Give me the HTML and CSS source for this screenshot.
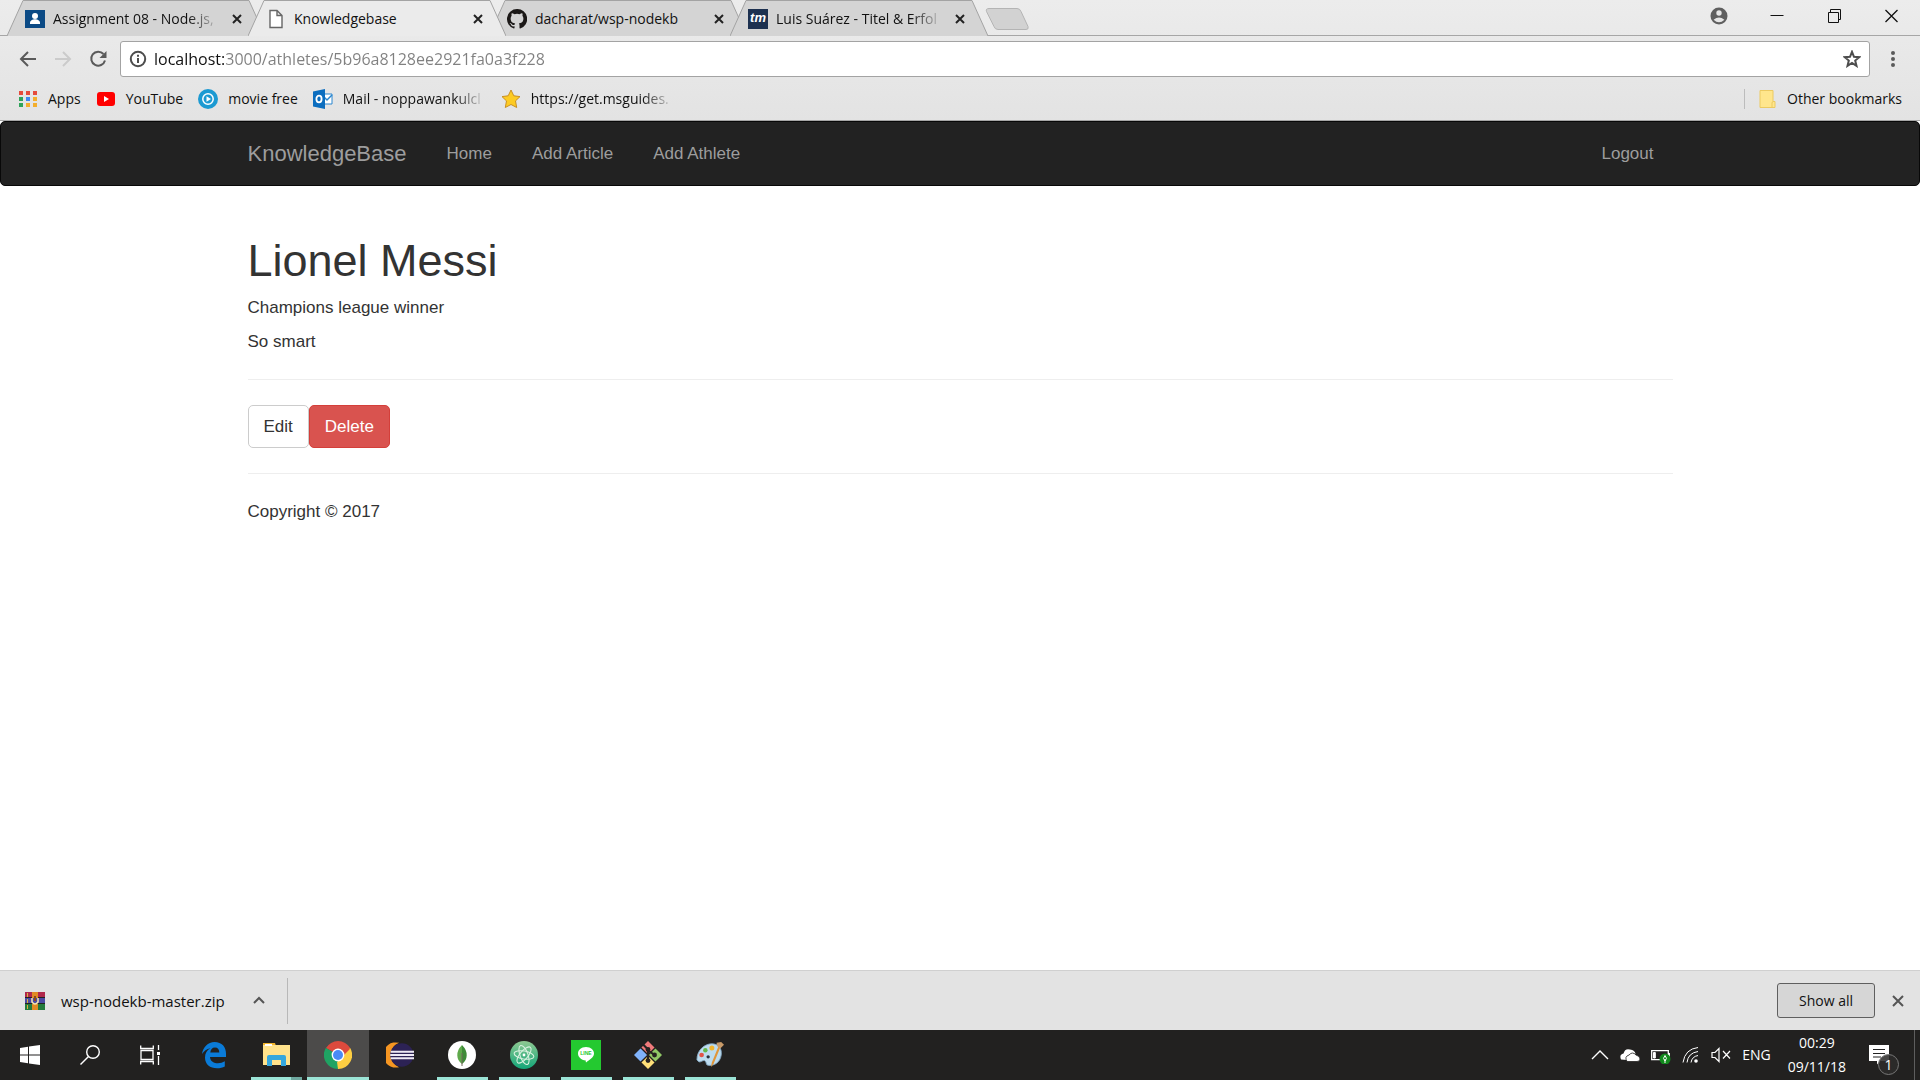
FILE: index.html
```html
<!DOCTYPE html>
<html lang="en">
<head>
<meta charset="utf-8">
<title>Knowledgebase</title>
<link rel="stylesheet" href="styles.css">
</head>
<body>
<header class="browser">
  <div class="tabstrip">
    <div class="tabs">
      <div class="tab">
        <svg class="tab-shape" viewBox="0 0 258 36"><path d="M0 36 L16 .5 H242 L258 36"/></svg>
        <svg class="favicon" viewBox="0 0 20 20"><rect y="1" width="20" height="18" fill="#0b4a85"/><circle cx="10" cy="7" r="3" fill="#fff"/><path d="M5 14c0-5 10-5 10 0v1H5z" fill="#fff"/></svg>
        <span class="tab-title faded">Assignment 08 - Node.js,</span>
        <button class="tab-close" aria-label="Close tab"><svg viewBox="0 0 12 12"><path d="M2 2l8 8M10 2l-8 8"/></svg></button>
      </div>
      <div class="tab active">
        <svg class="tab-shape" viewBox="0 0 258 36"><path d="M0 36 L16 .5 H242 L258 36"/></svg>
        <svg class="favicon" viewBox="0 0 20 20"><path d="M4 1.500h7l5 5v12H4zM11 1.500v5h5" fill="#fff" stroke="#666" stroke-width="1.400"/></svg>
        <span class="tab-title">Knowledgebase</span>
        <button class="tab-close" aria-label="Close tab"><svg viewBox="0 0 12 12"><path d="M2 2l8 8M10 2l-8 8"/></svg></button>
      </div>
      <div class="tab">
        <svg class="tab-shape" viewBox="0 0 258 36"><path d="M0 36 L16 .5 H242 L258 36"/></svg>
        <svg class="favicon" viewBox="0 0 16 16"><path fill="#1b1817" d="M8 0a8 8 0 0 0-2.530 15.590c.4.070.55-.17.55-.38v-1.340c-2.230.49-2.700-1.070-2.700-1.070-.36-.92-.89-1.170-.89-1.170-.73-.5.050-.49.050-.49.810.060 1.230.830 1.230.830.720 1.230 1.880.87 2.340.67.070-.52.280-.87.510-1.070-1.780-.2-3.640-.89-3.640-3.950 0-.87.310-1.590.820-2.150-.080-.2-.360-1.020.080-2.120 0 0 .67-.21 2.200.82a7.600 7.600 0 0 1 4 0c1.530-1.040 2.200-.82 2.200-.82.440 1.100.16 1.920.080 2.120.51.560.82 1.270.82 2.150 0 3.070-1.870 3.750-3.650 3.950.29.25.54.73.54 1.480v2.200c0 .21.150.46.550.38A8 8 0 0 0 8 0z"/></svg>
        <span class="tab-title">dacharat/wsp-nodekb</span>
        <button class="tab-close" aria-label="Close tab"><svg viewBox="0 0 12 12"><path d="M2 2l8 8M10 2l-8 8"/></svg></button>
      </div>
      <div class="tab">
        <svg class="tab-shape" viewBox="0 0 258 36"><path d="M0 36 L16 .5 H242 L258 36"/></svg>
        <span class="favicon tm">tm</span>
        <span class="tab-title faded">Luis Suárez - Titel &amp; Erfol</span>
        <button class="tab-close" aria-label="Close tab"><svg viewBox="0 0 12 12"><path d="M2 2l8 8M10 2l-8 8"/></svg></button>
      </div>
      <button class="new-tab" aria-label="New tab"><svg viewBox="0 0 44 22"><path d="M4 .5h28q3 0 4 3l7 15q1 3-2 3H13q-3 0-4-3L1.500 3.500Q.5.5 4 .5z"/></svg></button>
    </div>
    <div class="window-buttons">
      <button aria-label="Profile"><svg viewBox="0 0 18 18"><circle cx="9" cy="9" r="8.500" fill="#5f5f5f"/><circle cx="9" cy="6" r="2.700" fill="#e6e6e6"/><path d="M3.600 12.700q5.400-4.500 10.800 0-5.400 5.300-10.800 0z" fill="#e6e6e6"/></svg></button>
      <button aria-label="Minimize"><svg viewBox="0 0 18 18"><path d="M2.500 8.500h13"/></svg></button>
      <button aria-label="Restore"><svg viewBox="0 0 18 18"><path d="M2.500 5.500h10v10h-10zM4.500 5.500v-3h10v10h-2"/></svg></button>
      <button aria-label="Close"><svg viewBox="0 0 18 18"><path d="M2.500 3l12 12M14.500 3l-12 12" stroke-width="1.300"/></svg></button>
    </div>
  </div>
  <div class="toolbar">
    <button class="tool" aria-label="Back"><svg viewBox="0 0 18 18"><path d="M17 9H2M9 2L2 9l7 7"/></svg></button>
    <button class="tool off" aria-label="Forward"><svg viewBox="0 0 18 18"><path d="M1 9h15M9 2l7 7-7 7"/></svg></button>
    <button class="tool" aria-label="Reload"><svg viewBox="0 0 18 18"><path d="M14.500 4A7 7 0 1 0 16 10.500"/><path d="M17.500 1v7h-7z" fill="#5a5a5a" stroke="none"/></svg></button>
    <div class="omnibox">
      <svg class="info" viewBox="0 0 18 18"><circle cx="9" cy="9" r="7.200"/><path d="M9 8v5M9 4.800v2"/></svg>
      <input class="url" type="text" aria-label="Address" value="localhost:3000/athletes/5b96a8128ee2921fa0a3f228">
      <svg class="star" viewBox="0 0 18 18"><path d="M9 1.800l2 5 5.300.4-4.100 3.400 1.300 5.300L9 13l-4.500 2.900 1.300-5.300-4.100-3.400L7 6.800z"/></svg>
    </div>
    <button class="menu" aria-label="Menu"><svg viewBox="0 0 4 16"><circle cx="2" cy="2" r="2"/><circle cx="2" cy="8" r="2"/><circle cx="2" cy="14" r="2"/></svg></button>
  </div>
  <nav class="bookmarks" aria-label="Bookmarks">
    <a href="#"><svg viewBox="0 0 20 20"><path fill="#e54b3c" d="M1 2h4v4H1zM8 2h4v4H8zM15 2h4v4h-4z"/><path fill="#2fa35a" d="M1 8h4v4H1zM1 14h4v4H1z"/><path fill="#3f87f2" d="M8 8h4v4H8z"/><path fill="#f3ae2c" d="M15 8h4v4h-4zM8 14h4v4H8zM15 14h4v4h-4z"/></svg><span>Apps</span></a>
    <a href="#"><svg viewBox="0 0 20 20"><rect x="1" y="3" width="18" height="14" rx="3" fill="#f00"/><path d="M8 7l5 3-5 3z" fill="#fff"/></svg><span>YouTube</span></a>
    <a href="#"><svg viewBox="0 0 20 20"><circle cx="10" cy="10" r="10" fill="#1c9ad2"/><circle cx="10" cy="10" r="5.200" fill="none" stroke="#fff" stroke-width="1.500"/><path d="M8.500 7.300l4.500 2.700-4.500 2.700z" fill="#fff"/></svg><span>movie free</span></a>
    <a href="#"><svg viewBox="0 0 20 20"><path d="M10 5h9v10h-9z" fill="#fff" stroke="#2a86cf"/><path d="M11 8l3 3 5-5" fill="none" stroke="#2a86cf" stroke-width="1.500"/><path d="M0 2.500L12 0v20L0 17.500z" fill="#0b6dbf"/><ellipse cx="6" cy="10" rx="2.600" ry="3.300" fill="none" stroke="#fff" stroke-width="1.800"/></svg><span class="bm-long faded">Mail - noppawankulcl</span></a>
    <a href="#"><svg viewBox="0 0 20 20"><path d="M10 1l2.800 5.800 6.200.8-4.500 4.300 1.200 6.600-5.700-3-5.700 3 1.200-6.600L1 7.600l6.200-.8z" fill="#fdcb22" stroke="#c99023" stroke-linejoin="round"/></svg><span class="bm-long faded">https://get.msguides.</span></a>
    <a href="#" class="other"><svg viewBox="0 0 20 20"><path d="M3 1.500h13v11h2v6H3z" fill="#ffe68c" stroke="#ecca61"/><path d="M15 18v-4q0-1.500 1.500-1.500" fill="none" stroke="#ecca61"/></svg><span>Other bookmarks</span></a>
  </nav>
</header>

<div class="site">
  <nav class="navbar">
    <div class="container navbar-row">
      <a href="#" class="brand">KnowledgeBase</a>
      <a href="#">Home</a>
      <a href="#">Add Article</a>
      <a href="#">Add Athlete</a>
      <a href="#" class="logout">Logout</a>
    </div>
  </nav>
  <main class="container">
    <h1>Lionel Messi</h1>
    <p>Champions league winner</p>
    <p>So smart</p>
    <hr>
    <div class="actions">
      <button class="btn">Edit</button>
      <button class="btn btn-danger">Delete</button>
    </div>
    <hr>
    <footer>Copyright © 2017</footer>
  </main>
</div>

<section class="downloads" aria-label="Downloads">
  <div class="download">
    <svg class="rar" viewBox="0 0 20 18"><path fill="#b0284c" d="M0 0h20v6H0z"/><path fill="#4b4aa3" d="M0 6h20v6H0z"/><path fill="#247a3c" d="M0 12h20v6H0z"/><path d="M0 5.500h20M0 11.500h20" stroke="#222"/><path d="M2.500 1v4M2.500 7v4M2.500 13v4" stroke="#d9b23a"/><path fill="#e08b24" d="M7 0h6v6H7zM7 12h6v6H7z"/><path fill="none" stroke="#f7e8b0" stroke-width="1.500" d="M7 6v4q3 4 6 0V6"/><path d="M9 4h2v5H9z" fill="#8a4a1a"/></svg>
    <span>wsp-nodekb-master.zip</span>
    <button class="icon-button" aria-label="Download options"><svg viewBox="0 0 14 14"><path d="M2 9l5-5 5 5"/></svg></button>
  </div>
  <button class="show-all">Show all</button>
  <button class="icon-button" aria-label="Close downloads"><svg viewBox="0 0 14 14"><path d="M2 2l10 10M12 2L2 12"/></svg></button>
</section>

<footer class="taskbar">
  <div class="system">
    <button aria-label="Start"><svg viewBox="0 0 20 20" fill="#fff"><path d="M0 3l8-1.200V9.500H0zM9 1.600L20 0v9.500H9zM0 10.500h8v7.700L0 17zM9 10.500h11V20L9 18.400z"/></svg></button>
    <button aria-label="Search"><svg viewBox="0 0 20 20" fill="none" stroke="#fff" stroke-width="1.400"><circle cx="13" cy="7" r="6.300"/><path d="M8.500 11.500L.5 19.500"/></svg></button>
    <button aria-label="Task view"><svg viewBox="0 0 20 20" fill="none" stroke="#fff" stroke-width="1.300"><path d="M1 5.500h12v9H1zM.7.500v3h12.600v-3M.7 19.500v-3h12.600v3M18.500 0v5M18.500 11v9"/><path d="M17 7h3v3h-3z" fill="#fff" stroke="none"/></svg></button>
  </div>
  <div class="apps">
    <button aria-label="Edge"><svg viewBox="0 0 28 28"><path fill="#0a7bd8" d="M2 13C3 6 8 1 14.500 1 22 1 26 6 26 12.500V16H10c.3 4.500 4 6.300 8 6.300 2.500 0 4.700-.7 6.800-2v5.200C22.700 26.700 20 27.300 17 27.300c-7 0-12-4-12-10.800 0-4 2-7.500 5.500-9.200C6.500 8 4 10 2 13zm8.300-1.500h9C19.300 8.500 18 6.500 15 6.500s-4.400 2-4.700 5z"/></svg></button>
    <button class="running grouped" aria-label="File Explorer"><svg viewBox="0 0 28 28"><path fill="#f2b52d" d="M1 2h12l1 3H1z"/><path fill="#ffe28b" d="M1 4h27v20H1z"/><path d="M3 4h7" stroke="#fff" stroke-width="2"/><path fill="#35a7dd" d="M5 25V16q0-2 2-2h15q2 0 2 2v9h-5v-6h-9v6z"/></svg></button>
    <button class="running current" aria-label="Chrome"><svg viewBox="0 0 28 28"><path fill="#dc4a3d" d="M14 14L2 7a14 14 0 0 1 24.200 0z"/><path fill="#fdce42" d="M14 14L26.200 7A14 14 0 0 1 14 28z"/><path fill="#1fa363" d="M14 14v14A14 14 0 0 1 1.800 7z"/><path fill="#dc4a3d" d="M14 7.500h12.400L20 14z"/><path fill="#fdce42" d="M19.600 17.200L14 28l-1-7z"/><path fill="#1fa363" d="M1.800 7l6.600 11 4-4z"/><circle cx="14" cy="14" r="6.400" fill="#fff"/><circle cx="14" cy="14" r="5" fill="#4a8af4"/></svg></button>
    <button aria-label="Eclipse"><svg viewBox="0 0 30 28"><path d="M14 1A13.500 13.500 0 1 0 14 27 14 14 0 0 1 14 1z" fill="#f69622"/><circle cx="17" cy="14" r="12.500" fill="#2c2255"/><path d="M5 10.500h25M4.500 14h26M5 17.500h25" stroke="#eeeaf5" stroke-width="2"/></svg></button>
    <button class="running" aria-label="MongoDB"><svg viewBox="0 0 28 28"><circle cx="14" cy="14" r="14" fill="#fff"/><path d="M14 4Q9 9 9.300 14.500 9.500 20 14 23z" fill="#5fa94b"/><path d="M14 4q5 5 4.700 10.500Q18.500 20 14 23z" fill="#3f8b38"/><path d="M14 12v13" stroke="#74685a"/></svg></button>
    <button class="running" aria-label="Atom"><svg viewBox="0 0 28 28"><defs><linearGradient id="atom" x1="0" y1="0" x2="0" y2="1"><stop offset="0" stop-color="#8fc992"/><stop offset="1" stop-color="#12a678"/></linearGradient></defs><circle cx="14" cy="14" r="14" fill="url(#atom)"/><g fill="none" stroke="#d8f1df" stroke-width="1.100"><ellipse cx="14" cy="14" rx="10" ry="4" transform="rotate(10 14 14)"/><ellipse cx="14" cy="14" rx="10" ry="4" transform="rotate(70 14 14)"/><ellipse cx="14" cy="14" rx="10" ry="4" transform="rotate(130 14 14)"/></g><circle cx="14" cy="14" r="1.400" fill="#fff"/></svg></button>
    <button class="running" aria-label="LINE"><span class="line-icon"><svg viewBox="0 0 30 30"><path d="M0 0h30v30H0z" fill="#24c930"/><path d="M15 7c5 0 8 3 8 6.500 0 4-5 6.500-7.500 8.700-.8.500-.8-.8-.7-1.800C10 20 7 17 7 13.500 7 10 10 7 15 7z" fill="#fff"/></svg><b>LINE</b></span></button>
    <button class="running" aria-label="Git"><svg viewBox="0 0 30 30"><path d="M15 0l7 7-7 7-7-7z" fill="#f17a7b"/><path d="M7 8l7 7-7 7-7-7z" fill="#80b3fb"/><path d="M23 8l7 7-7 7-7-7z" fill="#90c766"/><path d="M15 16l7 7-7 7-7-7z" fill="#ffe079"/><path d="M10 4l5 5v12M15 10l7 5" fill="none" stroke="#262321" stroke-width="2.300"/><circle cx="15" cy="9" r="2.600" fill="#262321"/><circle cx="15" cy="21" r="2.600" fill="#262321"/><circle cx="22" cy="15" r="2.600" fill="#262321"/></svg></button>
    <button class="running" aria-label="Paint"><svg viewBox="0 0 30 30"><path d="M1 20C1 10 9 3 17 3c7 0 11 5 10 12-1 8-8 12-14 11-3 0-1-4-4-5-3-.5-5 4-8-1z" fill="#bddcef" stroke="#84a9c4"/><circle cx="6" cy="15" r="2.500" fill="#e15348"/><circle cx="10" cy="10" r="2.400" fill="#65b84c"/><circle cx="17" cy="7.500" r="2.700" fill="#f1b52e"/><circle cx="13" cy="17" r="1.800" fill="#29323e"/><path d="M16 28l1-5L24 6l2 1-7 17z" fill="#e0963a"/><path d="M23 6l-1-4 5-1 3 3-4 4z" fill="#c89a68"/></svg></button>
  </div>
  <div class="tray">
    <svg class="t-up" viewBox="0 0 18 18"><path d="M1 13l8-8 8 8" stroke-width="1.400"/></svg>
    <svg class="t-cloud" viewBox="0 0 20 18"><path d="M1 13.500q-2-5 2.500-6Q5 2 10 3.500q5 .5 5.500 4.500-7-2-8.500 6z" fill="#fff" stroke="none"/><path d="M7 15.500q-3-5 2-6.500 3.500-4 7 0 4 1 4 4 0 2.500-3 2.500z" fill="#fff" stroke="#222120" stroke-width=".8"/></svg>
    <svg class="t-battery" viewBox="0 0 20 18"><path d="M.7 4.700h16.600v9H.7zM18.300 7v4" stroke-width="1.300"/><path d="M2.500 6.500h1.800v5.500H2.500z" fill="#fff"/><circle cx="14" cy="13" r="5.500" fill="#128a1d" stroke="none"/><path d="M14 9.500q-3 3 0 5.500 3-2.500 0-5.500zM14 13v4"/></svg>
    <svg class="t-wifi" viewBox="0 0 18 18"><path d="M1 16.500Q3 3 16 1.500M5 16.500Q6 7 16 5.500M9 16.500Q10 10.500 16 9.500"/><circle cx="14" cy="15" r="1.800" fill="#fff" stroke="none"/></svg>
    <svg class="t-volume" viewBox="0 0 20 18"><path d="M1 6.500h3l4-4v13l-4-4H1zM12 5l7 7.500M19 5l-7 7.500" stroke-width="1.200"/></svg>
    <span class="lang">ENG</span>
    <div class="clock"><span>00:29</span><span>09/11/18</span></div>
    <div class="notify"><svg viewBox="0 0 20 20"><path d="M0 0h20v16H11l-3 3.500V16H0z" fill="#fff" stroke="none"/><path d="M4 4.500h12M4 8.500h12M4 12h8" stroke="#222"/></svg><span class="badge">1</span></div>
  </div>
</footer>
</body>
</html>
```

FILE: styles.css
```css
* { box-sizing: border-box; }

body {
  margin: 0;
  min-height: 100vh;
  display: flex;
  flex-direction: column;
  background: #fff;
  color: #111;
  font: 14px/20px "Open Sans", "Noto Sans", sans-serif;
}

button {
  display: flex;
  align-items: center;
  justify-content: center;
  padding: 0;
  border: 0;
  background: none;
  font: inherit;
  color: inherit;
}

a { color: inherit; text-decoration: none; }
svg { display: block; flex: none; }

.faded {
  -webkit-mask-image: linear-gradient(90deg, #000 calc(100% - 32px), transparent);
  mask-image: linear-gradient(90deg, #000 calc(100% - 32px), transparent);
}

/* Browser frame */
.browser {
  background: linear-gradient(#ececec, #e3e3e3);
  border-bottom: 1px solid #a6a6a6;
}

.tabstrip {
  display: flex;
  justify-content: space-between;
  height: 36px;
  border-bottom: 1px solid #a6a6a6;
}

.tabs { display: flex; padding-left: 7px; }

.tab {
  position: relative;
  display: flex;
  align-items: center;
  width: 258px;
  height: 36px;
  padding: 2px 19px 0 18px;
  margin-right: -17px;
}

.tab.active { z-index: 1; }
.tab > * { position: relative; }
.tab > .tab-shape { position: absolute; inset: 0; width: 100%; height: 100%; }
.tab-shape path { fill: #d4d4d4; stroke: #a3a3a3; }
.tab.active .tab-shape path { fill: #ebebeb; }

.favicon { width: 20px; height: 20px; margin-right: 8px; }

.tm {
  background: #1d3150;
  color: #fff;
  font: italic bold 13px/18px "Liberation Sans", sans-serif;
  text-align: center;
}

.tab-title { flex: 1; overflow: hidden; white-space: nowrap; color: #111; }
.tab-close { width: 18px; height: 18px; margin-left: 8px; }
.tab-close svg { width: 12px; height: 12px; stroke: #222; stroke-width: 2; }

.new-tab { height: 22px; margin: 8px 0 0 14px; }
.new-tab svg { width: 44px; height: 22px; fill: #d2d2d2; stroke: #b4b4b4; }

.window-buttons { display: flex; }
.window-buttons button { width: 57px; height: 32px; }
.window-buttons button:nth-child(-n+2) { width: 58px; }
.window-buttons svg { width: 18px; height: 18px; fill: none; stroke: #111; }
.window-buttons button:first-child svg { stroke: none; }

.toolbar {
  display: flex;
  align-items: center;
  gap: 17px;
  padding: 5px 25px 5px 19px;
}

.tool svg { width: 18px; height: 18px; fill: none; stroke: #5a5a5a; stroke-width: 2; }
.tool.off svg { stroke: #cbcbcb; }

.omnibox {
  flex: 1;
  display: flex;
  align-items: center;
  gap: 7px;
  height: 36px;
  margin: 0 4px 0 -4px;
  padding: 0 8px;
  border: 1px solid #a3a3a3;
  border-radius: 3px;
  background: #fff;
}

.info, .star { width: 18px; height: 18px; fill: none; stroke: #4d4d4d; stroke-width: 2; }

.url {
  flex: 1;
  min-width: 0;
  height: 28px;
  padding: 0;
  border: 0;
  outline: 0;
  font: 16px/28px "Open Sans", "Noto Sans", sans-serif;
  color: transparent;
  background: linear-gradient(90deg, #111 70px, #808080 70px);
  -webkit-background-clip: text;
  background-clip: text;
}

.menu svg { width: 4px; height: 16px; fill: #5a5a5a; }

.bookmarks {
  display: flex;
  align-items: center;
  gap: 15px;
  height: 38px;
  padding: 0 18px 4px;
}

.bookmarks a { display: flex; align-items: center; gap: 10px; white-space: nowrap; }
.bookmarks svg { width: 20px; height: 20px; }
.bm-long { width: 143px; overflow: hidden; }
.other { margin-left: auto; padding-left: 12px; border-left: 1px solid #bcbcbc; }

/* Site */
.site {
  flex: 1;
  color: #333;
  font: 17px/25px "Liberation Sans", Arial, sans-serif;
}

.container { width: 100%; max-width: 1463px; margin: 0 auto; padding: 0 19px; }

.navbar {
  display: flex;
  min-height: 65px;
  margin-bottom: 50px;
  border: 1px solid #080808;
  border-radius: 5px;
  background: #222;
  color: #9d9d9d;
}

.navbar-row { display: flex; align-items: center; gap: 40px; }
.brand { font-size: 22px; }
.logout { margin-left: auto; padding-right: 19px; }

h1 { margin: 0 0 9px; font-size: 45px; font-weight: 400; line-height: 50px; }
p { margin: 0 0 9px; }
hr { margin: 25px 0; border: 0; border-top: 1px solid #eee; }

.actions { display: flex; }
.btn {
  height: 43px;
  padding: 0 15px;
  border: 1px solid #ccc;
  border-radius: 5px;
  background: #fff;
}
.btn-danger { border-color: #d43f3a; background: #d9534f; color: #fff; }

/* Downloads shelf */
.downloads {
  display: flex;
  align-items: center;
  gap: 16px;
  height: 60px;
  padding-right: 15px;
  border-top: 1px solid #d0d0d0;
  background: #e3e3e3;
}

.download {
  display: flex;
  align-items: center;
  gap: 16px;
  height: 46px;
  margin-right: auto;
  padding: 0 21px 0 25px;
  border-right: 1px solid #b8b8b8;
  font-size: 15px;
}

.rar { width: 20px; height: 18px; }
.icon-button svg { width: 14px; height: 14px; fill: none; stroke: #555; stroke-width: 2; }
.download .icon-button { margin-left: 11px; }

.show-all {
  width: 98px;
  height: 35px;
  border: 1px solid #5f5f5f;
  border-radius: 3px;
  background: #d6d6d6;
}

/* Taskbar */
.taskbar {
  display: flex;
  height: 50px;
  background: #222120;
  color: #fff;
}

.system, .apps { display: flex; }
.system button { width: 60px; }
.system svg { width: 20px; height: 20px; }
.apps { margin-left: 3px; }
.apps button { position: relative; width: 62px; }
.apps svg { width: 28px; height: 28px; }
.apps .line-icon svg { width: 30px; height: 30px; }

.running::after {
  content: "";
  position: absolute;
  bottom: 0;
  left: 6px;
  right: 5px;
  height: 3px;
  background: #9be4d6;
}
.grouped::after { background: linear-gradient(90deg, #9be4d6 40px, #6fa89f 40px); }
.apps .current { background: #4c4b4a; }
.current::after { left: 0; right: 0; }

.line-icon { position: relative; }
.line-icon b {
  position: absolute;
  inset: 9px 0 auto;
  color: #24c930;
  font: bold 5px/9px "Liberation Sans", sans-serif;
  text-align: center;
}

.tray {
  display: flex;
  align-items: center;
  margin-left: auto;
  padding-right: 5px;
  gap: 11px;
}
.tray svg { width: 18px; height: 18px; fill: none; stroke: #fff; }
.tray .t-cloud, .tray .t-battery, .tray .t-volume { width: 20px; }
.clock { display: flex; flex-direction: column; gap: 4px; text-align: center; margin-left: 6px; }

.notify {
  position: relative;
  display: flex;
  align-items: center;
  height: 50px;
  margin-left: 12px;
  padding-right: 25px;
  border-right: 1px solid #5e5e5e;
}
.tray .notify svg { width: 20px; height: 20px; }
.badge {
  position: absolute;
  left: 9px;
  top: 24px;
  width: 21px;
  height: 21px;
  border: 1px solid #777;
  border-radius: 50%;
  background: #2d2c2bdd;
  line-height: 19px;
  text-align: center;
}
```
